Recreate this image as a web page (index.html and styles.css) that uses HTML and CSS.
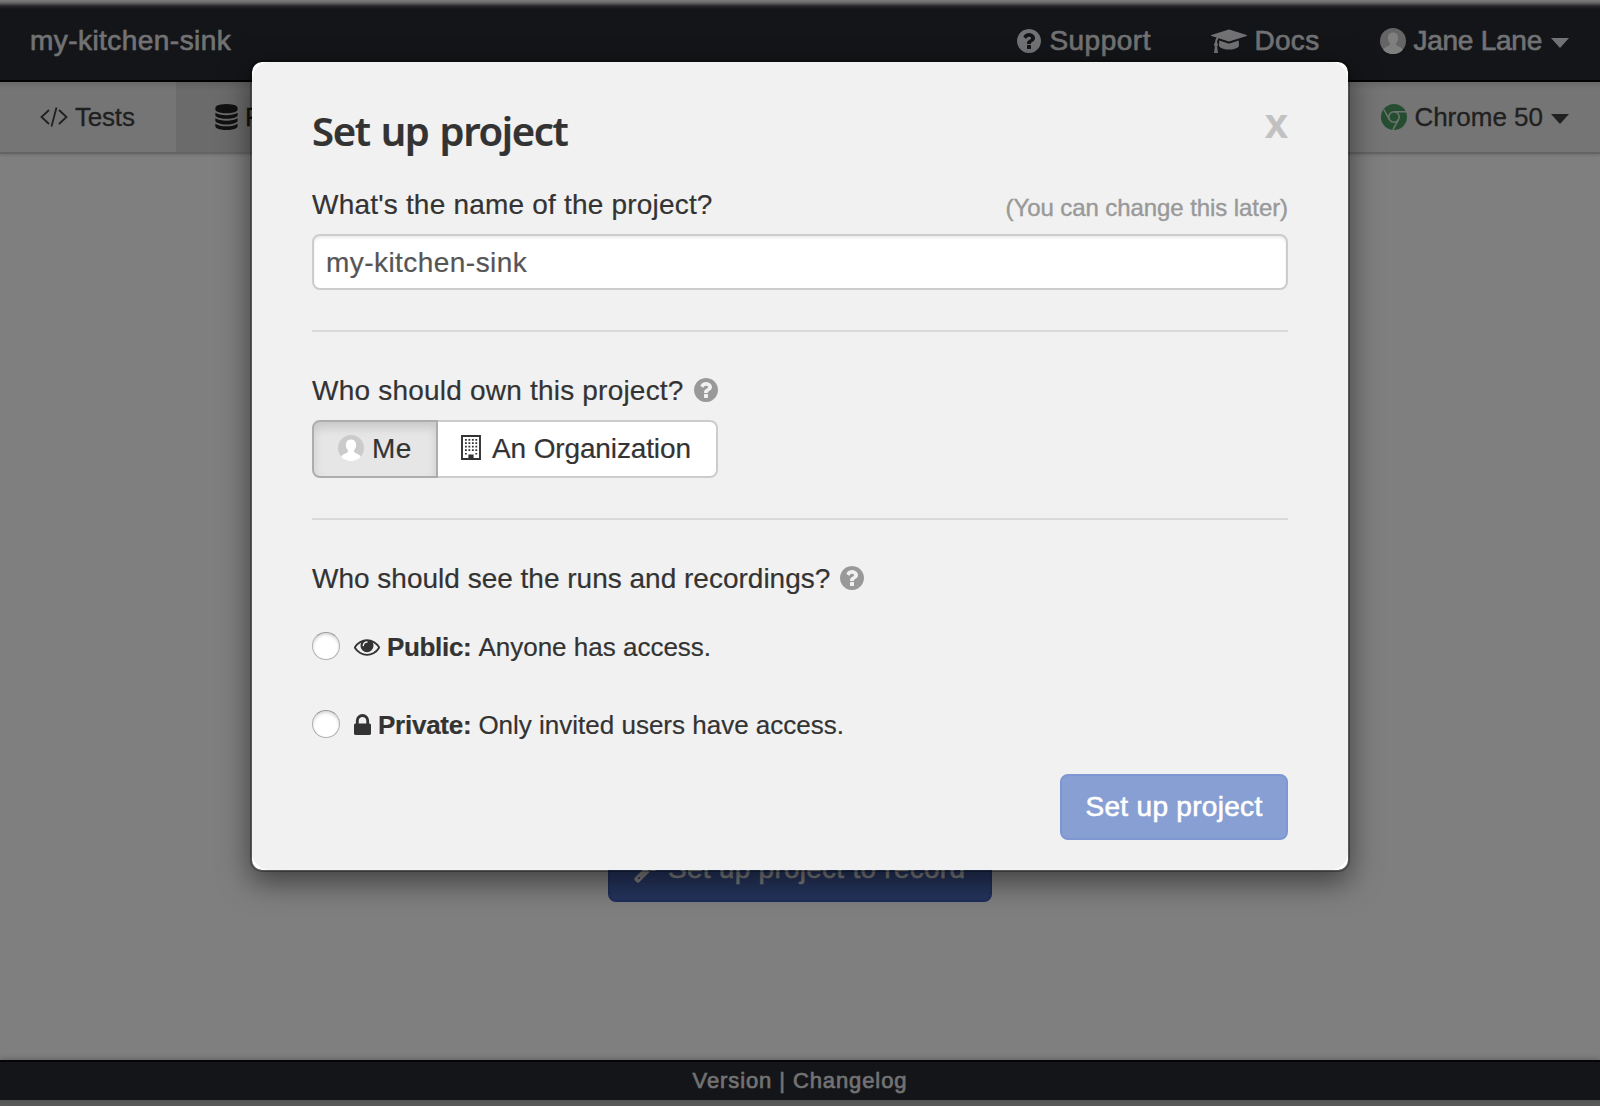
FILE: index.html
```
<!DOCTYPE html>
<html lang="en">
<head>
<meta charset="utf-8">
<title>my-kitchen-sink</title>
<link rel="stylesheet" href="styles.css">
</head>
<body>
<svg class="sprite" aria-hidden="true">
  <symbol id="question" viewBox="128 128 1536 1536"><path d="M1024 1376v-192q0-14-9-23t-23-9h-192q-14 0-23 9t-9 23v192q0 14 9 23t23 9h192q14 0 23-9t9-23zm256-672q0-88-55.500-163t-138.500-116-170-41q-243 0-371 213-15 24 8 42l132 100q7 6 19 6 16 0 25-12 53-68 86-92 34-24 86-24 48 0 85.500 26t37.500 59q0 38-20 61t-68 45q-63 28-115.500 86.500t-52.500 125.500v36q0 14 9 23t23 9h192q14 0 23-9t9-23q0-19 21.500-49.500t54.500-49.500q32-18 49-28.500t46-35 44.500-48 28-60.500 12.500-81zm384 192q0 209-103 385.500t-279.500 279.500-385.500 103-385.500-103-279.500-279.500-103-385.500 103-385.500 279.500-279.500 385.500-103 385.500 103 279.500 279.500 103 385.500z"/></symbol>
  <symbol id="avatar" viewBox="0 0 26 26"><circle cx="13" cy="13" r="13" fill="#cbcbcb"/><path d="M13 4.500c-3.400 0-5.300 2.500-5.100 5.700.1 2.300 1 3.800 2 5 .5 1.600-.3 2.400-2 3-2.300.8-3.800 1.700-4.700 3.500A13 13 0 0 0 22.800 21.700c-.9-1.800-2.400-2.700-4.700-3.500-1.700-.6-2.500-1.400-2-3 1-1.200 1.900-2.700 2-5 .2-3.200-1.700-5.700-5.100-5.700z" fill="#fff"/></symbol>
</svg>

<div class="app">
  <header class="topbar">
    <span class="brand t-brand">my-kitchen-sink</span>
    <nav class="topnav">
      <a class="nav-item"><svg class="i24"><use href="#question"/></svg><span class="t-support">Support</span></a>
      <a class="nav-item docs"><svg class="cap" viewBox="0 256 2304 1408"><path d="M1774 836l18 316q4 69-82 128t-235 93.500-323 34.500-323-34.500-235-93.500-82-128l18-316 574 181q22 7 48 7t48-7zm530-324q0 23-22 31l-1120 352q-4 1-10 1t-10-1l-652-206q-43 34-71 111.500t-34 178.500q63 36 63 109 0 69-58 107l58 433q2 14-8 25-9 11-24 11h-192q-15 0-24-11-10-11-8-25l58-433q-58-38-58-107 0-73 65-111 11-207 98-330l-333-104q-22-8-22-31t22-31l1120-352q4-1 10-1t10 1l1120 352q22 8 22 31z" transform="translate(0 96)"/></svg><span class="t-docs">Docs</span></a>
      <a class="nav-item user"><svg class="i26"><use href="#avatar"/></svg><span class="t-user">Jane Lane</span><i class="caret"></i></a>
    </nav>
  </header>

  <div class="tabs">
    <a class="tab"><svg class="code" viewBox="0 0 28 20"><path d="M9 3 1.500 10 9 17M19 3l7.500 7-7.500 7M16.500.500l-5 19"/></svg><span class="t-tests">Tests</span></a>
    <a class="tab active"><svg class="db" viewBox="128 0 1536 1792"><path d="M896 768q237 0 443-43t325-127v170q0 69-103 128t-280 93.500-385 34.500-385-34.500-280-93.500-103-128v-170q119 84 325 127t443 43zm0 768q237 0 443-43t325-127v170q0 69-103 128t-280 93.500-385 34.500-385-34.500-280-93.500-103-128v-170q119 84 325 127t443 43zm0-384q237 0 443-43t325-127v170q0 69-103 128t-280 93.500-385 34.500-385-34.500-280-93.500-103-128v-170q119 84 325 127t443 43zm0-1152q208 0 385 34.500t280 93.500 103 128v128q0 69-103 128t-280 93.500-385 34.500-385-34.500-280-93.500-103-128v-128q0-69 103-128t280-93.500 385-34.500z"/></svg><span>Runs</span></a>
    <a class="browser"><svg class="i26 chrome" viewBox="0 0 26 26"><circle cx="13" cy="13" r="13"/><circle class="line" cx="13" cy="13" r="5.200"/><path class="line" d="M13 7.800h12M8.500 15.600 2.700 5.500M17.500 15.600 11.800 25.800"/></svg><span>Chrome 50</span><i class="caret"></i></a>
  </div>

  <main class="content">
    <a class="record"><svg class="wrench" viewBox="64 0 1664 1792"><path d="M448 1472q0-26-19-45t-45-19-45 19-19 45 19 45 45 19 45-19 19-45zm644-420l-682 682q-37 37-90 37-52 0-91-37l-106-108q-38-36-38-90 0-53 38-91l681-681q39 98 114.500 173.500t173.500 114.500zm634-435q0 39-23 106-47 134-164.500 217.500t-258.500 83.500q-185 0-316.500-131.500t-131.500-316.500 131.500-316.500 316.500-131.500q58 0 121.500 16.500t107.500 46.500q16 11 16 28t-16 28l-293 169v224l193 107q5-3 79-48.500t135.500-81 70.500-35.500q15 0 23.500 10t8.500 25z"/></svg><span class="t-record">Set up project to record</span></a>
  </main>

  <footer class="footer"><span>Version | Changelog</span></footer>
</div>

<div class="backdrop"></div>
<section class="modal">
  <div class="modal-body">
    <div class="modal-head"><h1>Set up project</h1><span class="close">x</span></div>
    <div class="label-row"><span class="t-name">What's the name of the project?</span><span class="hint">(You can change this later)</span></div>
    <div class="input"><span class="t-brand">my-kitchen-sink</span></div>
    <hr>
    <div class="label-row help"><span class="t-own">Who should own this project?</span><svg class="i24"><use href="#question"/></svg></div>
    <div class="group">
      <span class="choice on"><svg class="i26"><use href="#avatar"/></svg><span class="t-me">Me</span></span>
      <span class="choice org"><svg class="building" viewBox="0 0 20 25"><path class="frame" d="M1 1h18v23H1z"/><path class="windows" d="M4 4.800h13M4 8.200h13M4 11.700h13M4 15.200h13"/><path d="M4 18h1.800v1.600H4zM14.400 18h1.800v1.600h-1.800zM7.400 19.500h5.200V24H7.400z"/></svg><span class="t-org">An Organization</span></span>
    </div>
    <hr>
    <div class="label-row help"><span>Who should see the runs and recordings?</span><svg class="i24"><use href="#question"/></svg></div>
    <div class="option"><i class="radio"></i><svg class="eye" viewBox="0 384 1792 1152"><path d="M1664 960q-152-236-381-353 61 104 61 225 0 185-131.500 316.500t-316.500 131.500-316.500-131.500-131.500-316.500q0-121 61-225-229 117-381 353 133 205 333.500 326.500t434.500 121.500 434.500-121.500 333.500-326.500zm-720-384q0-20-14-34t-34-14q-125 0-214.500 89.500t-89.500 214.500q0 20 14 34t34 14 34-14 14-34q0-86 61-147t147-61q20 0 34-14t14-34zm848 384q0 34-20 69-140 230-376.500 368.500t-499.500 138.500-499.500-139-376.500-368q-20-35-20-69t20-69q140-229 376.500-368t499.500-139 499.500 139 376.500 368q20 35 20 69z"/></svg><b class="t-public">Public:</b><span>Anyone has access.</span></div>
    <div class="option"><i class="radio"></i><svg class="lock" viewBox="320 128 1152 1408"><path d="M640 768h512v-192q0-106-75-181t-181-75-181 75-75 181v192zm832 96v576q0 40-28 68t-68 28h-960q-40 0-68-28t-28-68v-576q0-40 28-68t68-28h32v-192q0-184 132-316t316-132 316 132 132 316v192h32q40 0 68 28t28 68z"/></svg><b class="t-private">Private:</b><span>Only invited users have access.</span></div>
    <div class="submit"><span class="t-submit">Set up project</span></div>
  </div>
</section>
</body>
</html>
```
FILE: styles.css
```
* { box-sizing: border-box; }
body {
  margin: 0;
  position: relative;
  height: 1106px;
  overflow: hidden;
  background: #fff;
  color: #333;
  font: 28px/40px "Liberation Sans", Arial, sans-serif;
}
svg { display: block; flex: none; fill: currentColor; }
span, b { white-space: nowrap; }
.sprite { position: absolute; width: 0; height: 0; }
.i24 { width: 24px; height: 24px; }
.i26 { width: 26px; height: 26px; }
.caret { border: 9.500px solid transparent; border-top: 10px solid; border-bottom: 0; margin: 4px 1px 0 9px; }

/* Tracking per label */
.t-brand { letter-spacing: .45px; }
.t-support { letter-spacing: .5px; }
.t-docs { letter-spacing: .3px; }
.t-user { letter-spacing: -.25px; }
.t-tests { letter-spacing: -.2px; }
.t-record { letter-spacing: .26px; }
.t-name { letter-spacing: .2px; }
.t-own { letter-spacing: .21px; }
.t-me { letter-spacing: .5px; }
.t-org { letter-spacing: -.13px; }
.t-public { letter-spacing: -.33px; }
.t-private { letter-spacing: -.25px; }
.t-submit { letter-spacing: .3px; }

.app { display: flex; flex-direction: column; height: 1106px; padding-bottom: 6px; background: linear-gradient(#fff 1100px, #b4b4b4 1100px); }
.topbar {
  display: flex; align-items: center; justify-content: space-between;
  height: 82px; padding: 2px 30px 0; flex: none;
  border-bottom: 2px solid #040405;
  background: linear-gradient(#fff, #c4c4c8 3px, #4c4e54 6px, #282a31 9px);
  color: #e4e5e8;
  -webkit-text-stroke: .6px;
}
.topnav, .nav-item { display: flex; align-items: center; }
.nav-item .i24 { margin-right: 8px; }
.docs { margin-left: 60.5px; }
.cap { width: 36px; height: 24px; margin-right: 7px; }
.user { margin-left: 61px; }
.user .i26 { margin-right: 7px; }

.tabs {
  display: flex; height: 72px; flex: none;
  border-bottom: 2px solid #c8c8c8;
  background: linear-gradient(#d2d2d2, #eaeaea 8px);
  box-shadow: 0 1px 3px rgba(0,0,0,.15);
  font-size: 26px;
  color: #404040;
  -webkit-text-stroke: .3px;
}
.tab, .browser { display: flex; align-items: center; }
.tab { width: 176px; padding-left: 40px; }
.code { width: 28px; height: 20px; margin-right: 7px; fill: none; stroke: currentColor; stroke-width: 1.800; }
.active { padding-left: 39px; background: linear-gradient(#c0c0c0, #d6d6d6 8px); color: #222; }
.db { width: 23px; height: 26px; margin-right: 7px; }
.browser { margin-left: auto; padding-right: 30px; }
.browser .caret { margin-left: 8px; }
.chrome { color: #4a9d62; margin-right: 7px; }
.line { fill: none; stroke: #e0e8e2; stroke-width: 1.500; }

.content { flex: 1; display: flex; flex-direction: column; align-items: center; }
.record {
  display: flex; align-items: center;
  width: 384px; height: 66px; margin-top: 682px; padding-left: 24px;
  border: 2px solid #3d5cb4; border-radius: 8px;
  background: #4b68b8; color: #fff;
  -webkit-text-stroke: .5px;
}
.wrench { width: 26px; height: 28px; margin-right: 8px; }
.footer {
  height: 40px; border-top: 2px solid #0a0a0a;
  background: #282a31; color: #e4e5e8;
  box-shadow: 0 -1px 6px rgba(0,0,0,.25);
  text-align: center; font-size: 22px; line-height: 38px; letter-spacing: .9px;
  -webkit-text-stroke: .6px;
}

.backdrop { position: absolute; inset: 0; background: rgba(0,0,0,.5); }
.modal {
  position: absolute; left: 250px; top: 60px; width: 1100px; height: 812px;
  border: 2px solid rgba(0,0,0,.3); border-radius: 12px;
  background: #fff; background-clip: padding-box;
  box-shadow: 0 10px 30px rgba(0,0,0,.5);
}
.modal-body { height: 808px; padding: 44px 60px 0; border-radius: 18px; background: #f1f1f1; }
.modal-head { display: flex; justify-content: space-between; height: 48px; margin-bottom: 30px; }
h1 { margin: 0; font: 600 40px/50px "Noto Sans", sans-serif; letter-spacing: -1.35px; word-spacing: 2px; }
.close { font-size: 42px; line-height: 36px; font-weight: bold; color: #c1c1c1; }
.label-row { display: flex; justify-content: space-between; align-items: center; height: 40px; margin-bottom: 10px; }
.label-row span { padding-top: 2px; }
.label-row .hint { font-size: 24px; padding-top: 7px; color: #999; letter-spacing: -.08px; -webkit-text-stroke: .4px; }
.input {
  height: 56px; padding: 7px 12px;
  border: 2px solid #ccc; border-radius: 8px;
  background: #fff; color: #555;
  box-shadow: inset 0 2px 3px rgba(0,0,0,.08);
}
.modal-body { -webkit-text-stroke: .2px; }
hr { margin: 40px 0 38px; border: 0; height: 2px; background: #d9d9d9; }
.help { justify-content: flex-start; gap: 10px; }
.help .i24 { color: #999; }
.group { display: flex; height: 58px; }
.choice { display: flex; align-items: center; border: 2px solid #ccc; background: #fff; }
.on { width: 126px; padding-left: 24px; gap: 8px; border-color: #adadad; border-radius: 8px 0 0 8px; background: #e6e6e6; box-shadow: inset 0 6px 10px rgba(0,0,0,.125); }
.on .i26 { margin-bottom: 3px; }
.org { width: 280px; padding-left: 23px; gap: 11px; border-left: 0; border-radius: 0 8px 8px 0; }
.building { width: 20px; height: 25px; margin-bottom: 3px; }
.frame { fill: none; stroke: #333; stroke-width: 1.900; }
.windows { stroke: #333; stroke-width: 1.700; stroke-dasharray: 1.800 1.670; }
.option { display: flex; align-items: center; height: 28px; font-size: 26px; margin-top: 50px; }
.label-row + .option { margin-top: 34px; }
.option span, .option b { padding-top: 2px; }
.radio { width: 28px; height: 28px; margin-right: 14px; border: 1px solid #b0b0b0; border-top-color: #999; border-radius: 50%; background: #fff; box-shadow: inset 0 2px 3px rgba(0,0,0,.15); }
.eye { width: 26px; height: 17px; margin: 2px 7px 0 0; }
.lock { width: 17px; height: 21px; margin-right: 7px; }
.option b { margin-right: 7px; }
.submit {
  display: flex; align-items: center; justify-content: center;
  width: 228px; height: 66px; margin: 36px 0 0 auto;
  border: 2px solid #7e97d2; border-radius: 8px;
  background: #889fd4; color: #fff; -webkit-text-stroke: .6px;
}
```
